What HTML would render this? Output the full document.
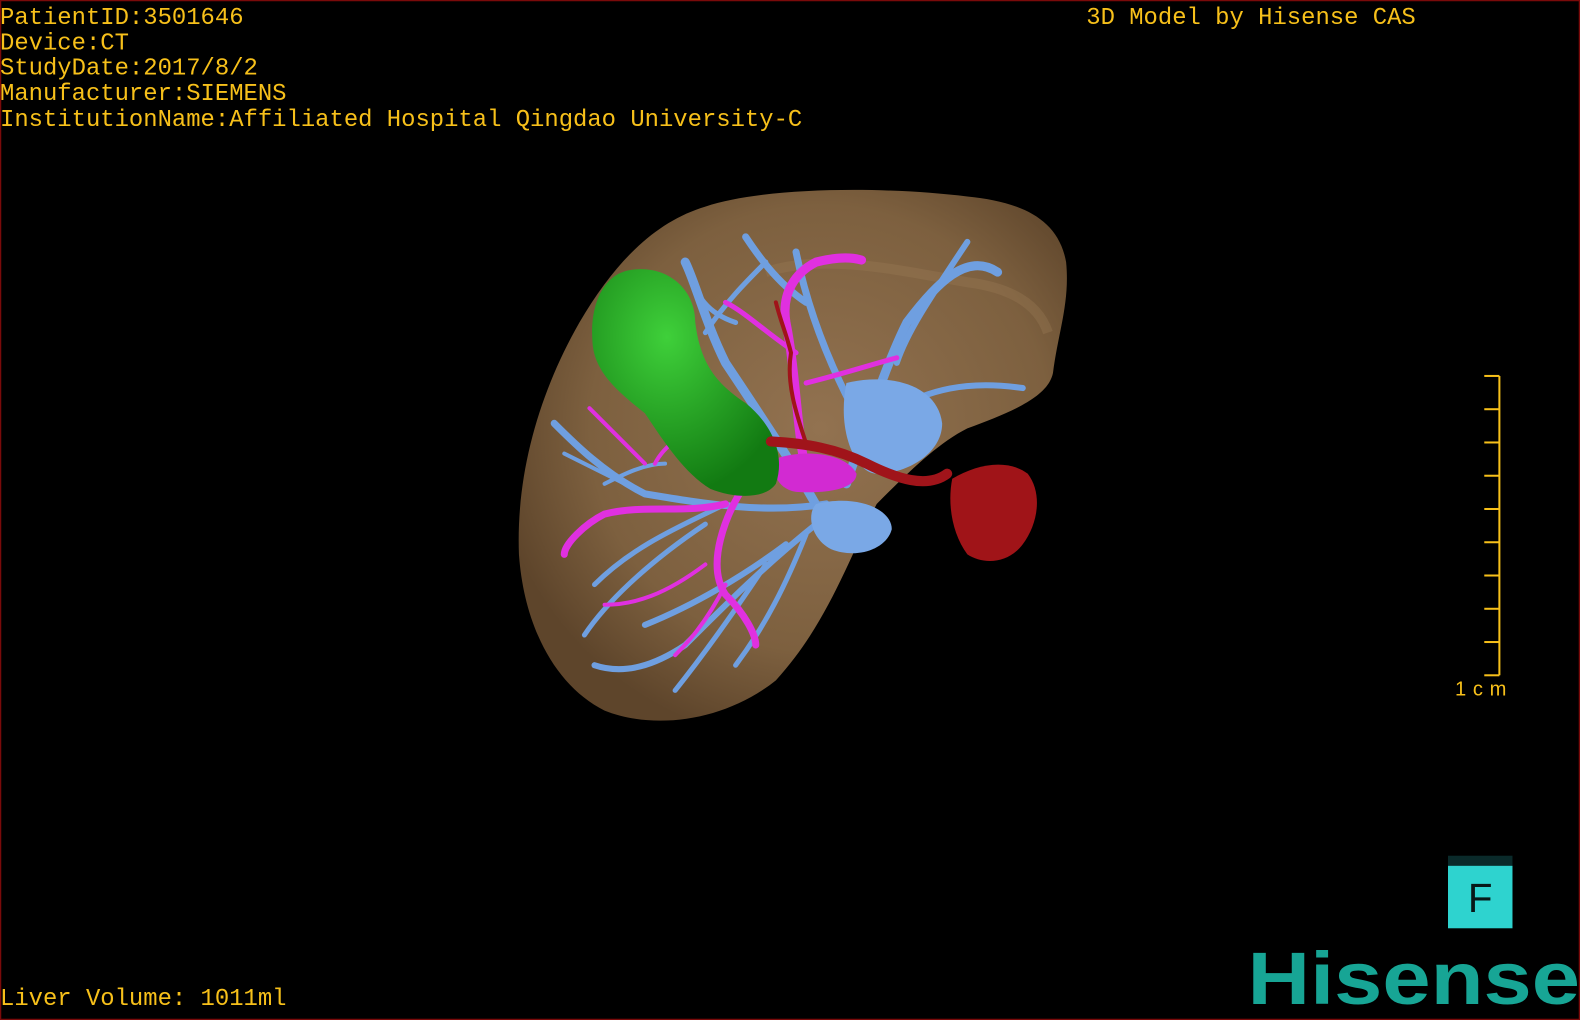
<!DOCTYPE html>
<html><head><meta charset="utf-8"><style>
html,body{margin:0;padding:0;background:#000;width:1580px;height:1020px;overflow:hidden}
svg{display:block}
</style></head><body>
<svg width="1580" height="1020" viewBox="0 0 1568 1012" preserveAspectRatio="none" xmlns="http://www.w3.org/2000/svg">
<defs>
<radialGradient id="lv" cx="0.55" cy="0.45" r="0.6">
<stop offset="0" stop-color="#927250"/><stop offset="0.7" stop-color="#7d603f"/><stop offset="1" stop-color="#5e452b"/>
</radialGradient>
<radialGradient id="gr" cx="0.4" cy="0.3" r="0.7">
<stop offset="0" stop-color="#3fd03a"/><stop offset="1" stop-color="#127a12"/>
</radialGradient>
</defs>
<rect x="0.5" y="0.5" width="1567" height="1011" fill="#000" stroke="#7a0a0a" stroke-width="1.5"/>
<path d="M700,205 C760,185 880,185 960,195 C1010,200 1050,215 1058,260 C1062,300 1050,330 1045,370 C1040,395 1000,410 960,425 C930,440 900,470 870,500 C840,560 820,620 770,675 C720,715 650,725 600,705 C550,680 520,620 515,550 C512,470 535,390 575,320 C610,260 650,220 700,205 Z" fill="url(#lv)"/>
<path d="M760,270 C820,250 900,270 960,280 C1000,285 1030,300 1040,330" stroke="#9a7a55" stroke-width="10" fill="none" opacity="0.35"/>
<g stroke="#6f9fe0" fill="none" stroke-linecap="round">
<path d="M820,520 C800,480 760,420 720,360 C700,320 690,280 680,260" stroke-width="9"/>
<path d="M840,480 C860,420 880,360 900,320 C930,280 960,250 990,270" stroke-width="9"/>
<path d="M860,430 C820,360 800,300 790,250 M800,300 C770,280 750,250 740,235" stroke-width="7"/>
<path d="M900,400 C940,380 980,380 1015,385 M890,360 C900,330 920,300 960,240" stroke-width="6"/>
<path d="M820,500 C760,510 700,500 640,490 C600,470 570,440 550,420" stroke-width="7"/>
<path d="M810,520 C760,560 720,600 680,640 C650,660 620,670 590,660 M780,540 C740,570 690,600 640,620" stroke-width="6"/>
<path d="M800,530 C780,580 760,620 730,660 M760,560 C720,620 690,660 670,685" stroke-width="5"/>
<path d="M720,500 C680,520 630,540 590,580 M700,520 C640,560 600,600 580,630" stroke-width="5"/>
<path d="M700,330 C720,300 740,280 760,260 M730,320 C700,310 690,290 690,280" stroke-width="5"/>
<path d="M600,480 C620,470 640,460 660,460 M560,450 C600,470 620,480 640,490" stroke-width="4"/>
</g>
<path d="M840,380 C880,370 930,380 935,420 C935,450 900,470 870,470 C850,470 830,430 840,380 Z" fill="#7aa8e6"/>
<path d="M810,500 C850,490 885,505 885,525 C880,545 850,555 825,545 C805,535 800,510 810,500 Z" fill="#7aa8e6"/>
<g stroke="#e030e0" fill="none" stroke-linecap="round">
<path d="M800,470 C790,420 790,370 780,320 C775,290 790,270 810,260 C830,255 845,255 855,258" stroke-width="9"/>
<path d="M790,350 C760,330 740,310 720,300 M800,380 C840,370 870,360 890,355" stroke-width="5"/>
<path d="M740,480 C720,510 700,560 720,590 C740,610 750,630 750,640 M720,500 C680,510 640,500 600,510 C580,520 560,540 560,550" stroke-width="7"/>
<path d="M700,560 C660,590 630,600 600,600 M720,580 C700,620 680,640 670,650" stroke-width="4"/>
<path d="M640,460 C620,440 600,420 585,405 M650,460 C660,440 680,430 700,420" stroke-width="4"/>
</g>
<path d="M770,455 C800,445 840,450 850,470 C850,485 820,490 790,488 C770,485 765,465 770,455 Z" fill="#d22ad2"/>
<path d="M625,268 C660,262 690,285 690,320 C695,360 710,380 740,400 C765,420 780,450 770,480 C760,495 730,495 705,485 C680,470 660,440 640,410 C615,390 590,370 588,340 C585,300 600,272 625,268 Z" fill="url(#gr)"/>
<g stroke="#a0141a" fill="none" stroke-linecap="round">
<path d="M765,438 C800,440 830,445 860,460 C890,475 920,485 940,470" stroke-width="10"/>
<path d="M800,440 C790,410 780,380 785,350 C780,330 775,320 770,300" stroke-width="4"/>
</g>
<path d="M945,475 C970,460 1000,455 1020,470 C1035,490 1030,520 1015,540 C1000,560 975,560 960,550 C945,530 940,500 945,475 Z" fill="#a01418"/>
<g font-family="'Liberation Mono',monospace" font-size="23.7" fill="#f7c01a">
<text x="0" y="24">PatientID:3501646</text>
<text x="0" y="49">Device:CT</text>
<text x="0" y="74">StudyDate:2017/8/2</text>
<text x="0" y="99">Manufacturer:SIEMENS</text>
<text x="0" y="125">InstitutionName:Affiliated Hospital Qingdao University-C</text>
<text x="1078" y="24">3D Model by Hisense CAS</text>
<text x="0" y="997">Liver Volume: 1011ml</text>
</g>
<g stroke="#f7c01a" stroke-width="2">
<line x1="1488" y1="373" x2="1488" y2="670"/>
<line x1="1473" y1="373" x2="1488" y2="373"/><line x1="1473" y1="406" x2="1488" y2="406"/>
<line x1="1473" y1="439" x2="1488" y2="439"/><line x1="1473" y1="472" x2="1488" y2="472"/>
<line x1="1473" y1="505" x2="1488" y2="505"/><line x1="1473" y1="538" x2="1488" y2="538"/>
<line x1="1473" y1="571" x2="1488" y2="571"/><line x1="1473" y1="604" x2="1488" y2="604"/>
<line x1="1473" y1="637" x2="1488" y2="637"/><line x1="1473" y1="670" x2="1488" y2="670"/>
</g>
<text x="1444" y="690" font-family="'Liberation Sans',sans-serif" font-size="20" fill="#f7c01a" textLength="51" lengthAdjust="spacing">1cm</text>
<rect x="1437" y="849" width="64" height="10" fill="#0a2a2a"/>
<rect x="1437" y="859" width="64" height="62" fill="#2ed3cf"/>
<text x="1469" y="905" text-anchor="middle" font-family="'Liberation Sans',sans-serif" font-size="40" fill="#081818">F</text>
<text x="1238" y="996" font-family="'Liberation Sans',sans-serif" font-weight="bold" font-size="74" fill="#17a595" textLength="330" lengthAdjust="spacingAndGlyphs">Hisense</text>
</svg>
</body></html>
